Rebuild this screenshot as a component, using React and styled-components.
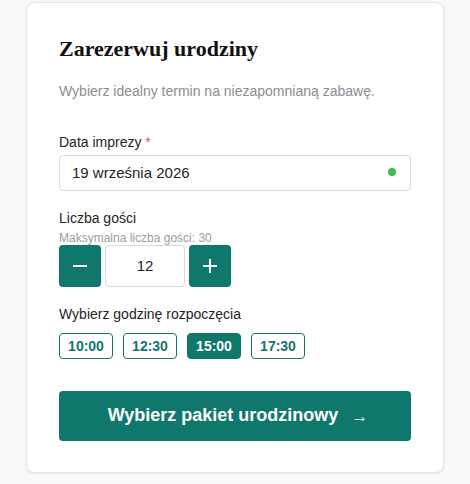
import React, { useState } from "react";
import styled, { createGlobalStyle } from "styled-components";

const Global = createGlobalStyle`
  html, body { margin: 0; padding: 0; background: #f8f9fb; }
  body { font-family: "Liberation Sans", Arial, sans-serif; color: #1f2328; }
  * { box-sizing: border-box; }
`;

const Page = styled.div`
  display: flex;
  justify-content: center;
  padding: 2px 0 10px;
`;

const Card = styled.div`
  width: 418px;
  background: #fff;
  border: 1px solid #e3e5e8;
  border-radius: 8px;
  box-shadow: 0 1px 3px rgba(0, 0, 0, 0.08);
  padding: 33px 32px 31px;
  display: flex;
  flex-direction: column;
`;

const Title = styled.h2`
  margin: 0;
  font-family: "Liberation Serif", "Times New Roman", serif;
  font-weight: 700;
  font-size: 22px;
  line-height: 1.2;
  color: #111;
`;

const Subtitle = styled.p`
  margin: 20px 0 0;
  font-size: 14px;
  line-height: 1.4;
  color: #8a8d92;
`;

const Label = styled.div`
  margin-top: ${(p) => p.$mt || 0}px;
  font-size: 14px;
  line-height: 1.2;
  color: #1f2328;
`;

const Req = styled.span`
  color: #e05a5a;
`;

const Hint = styled.div`
  margin-top: 4px;
  font-size: 12px;
  line-height: 1.2;
  color: #9a9da2;
`;

const DateBox = styled.div`
  margin-top: 4px;
  height: 36px;
  border: 1px solid #d6d9dd;
  border-radius: 4px;
  display: flex;
  align-items: center;
  justify-content: space-between;
  padding: 0 14px 1px 12px;
  font-size: 15px;
  color: #1f2328;
`;

const Dot = styled.span`
  width: 8px;
  height: 8px;
  border-radius: 50%;
  background: #3dbb4f;
`;

const Stepper = styled.div`
  margin-top: 0;
  display: flex;
  gap: 4px;
`;

const StepButton = styled.button`
  width: 42px;
  height: 42px;
  border: none;
  border-radius: 4px;
  background: #10776c;
  color: #fff;
  display: flex;
  align-items: center;
  justify-content: center;
  padding: 0;
  cursor: pointer;
`;

const Count = styled.div`
  width: 80px;
  height: 42px;
  border: 1px solid #d6d9dd;
  border-radius: 4px;
  display: flex;
  align-items: center;
  justify-content: center;
  font-size: 15px;
  color: #1f2328;
`;

const Times = styled.div`
  margin-top: 10px;
  display: flex;
  gap: 10px;
`;

const Chip = styled.button`
  height: 26px;
  width: 54px;
  padding: 0;
  border: 1px solid #10776c;
  border-radius: 4px;
  background: ${(p) => (p.$active ? "#10776c" : "#fff")};
  color: ${(p) => (p.$active ? "#fff" : "#10776c")};
  font-family: "Liberation Sans", Arial, sans-serif;
  font-weight: 700;
  font-size: 14px;
  cursor: pointer;
`;

const Cta = styled.button`
  margin-top: 32px;
  height: 50px;
  width: 100%;
  border: none;
  border-radius: 4px;
  background: #10776c;
  color: #fff;
  font-family: "Liberation Sans", Arial, sans-serif;
  font-weight: 700;
  font-size: 18px;
  display: flex;
  align-items: center;
  justify-content: center;
  gap: 13px;
  padding: 0 0 0 6px;
  cursor: pointer;
`;

const Arrow = styled.span`
  font-weight: 400;
  font-size: 17px;
  margin-top: 3px;
`;

const Icon = ({ plus }) => (
  <svg width="16" height="16" viewBox="0 0 16 16" fill="none" stroke="#fff" strokeWidth="2" strokeLinecap="butt">
    <line x1="1" y1="8" x2="15" y2="8" />
    {plus && <line x1="8" y1="1" x2="8" y2="15" />}
  </svg>
);

export default function App() {
  const [guests, setGuests] = useState(12);
  const [time, setTime] = useState("15:00");
  const times = ["10:00", "12:30", "15:00", "17:30"];
  return (
    <>
      <Global />
      <Page>
        <Card>
          <Title>Zarezerwuj urodziny</Title>
          <Subtitle>Wybierz idealny termin na niezapomnianą zabawę.</Subtitle>

          <Label $mt={32}>
            Data imprezy <Req>*</Req>
          </Label>
          <DateBox>
            <span>19 września 2026</span>
            <Dot />
          </DateBox>

          <Label $mt={19}>Liczba gości</Label>
          <Hint>Maksymalna liczba gości: 30</Hint>
          <Stepper>
            <StepButton onClick={() => setGuests((g) => Math.max(1, g - 1))}>
              <Icon />
            </StepButton>
            <Count>{guests}</Count>
            <StepButton onClick={() => setGuests((g) => Math.min(30, g + 1))}>
              <Icon plus />
            </StepButton>
          </Stepper>

          <Label $mt={19}>Wybierz godzinę rozpoczęcia</Label>
          <Times>
            {times.map((t) => (
              <Chip key={t} $active={t === time} onClick={() => setTime(t)}>
                {t}
              </Chip>
            ))}
          </Times>

          <Cta>
            Wybierz pakiet urodzinowy <Arrow>→</Arrow>
          </Cta>
        </Card>
      </Page>
    </>
  );
}
